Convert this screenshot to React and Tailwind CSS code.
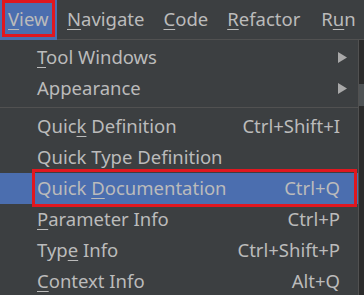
import React from "react";

const font = { fontFamily: '"Noto Sans", "Open Sans", sans-serif' };

function U({ children }) {
  return <span className="underline decoration-1 underline-offset-[3px]">{children}</span>;
}

function Arrow() {
  return (
    <svg width="9" height="11" viewBox="0 0 9 11" className="block">
      <polygon points="0,0 9,5.5 0,11" fill="#a9a9a9" />
    </svg>
  );
}

function Item({ label, shortcut, arrow, active }) {
  return (
    <div className={`relative flex h-[31px] items-center pl-[37px] ${arrow ? "pr-[11px]" : "pr-[18px]"} ${active ? "bg-[#4b6eaf]" : ""}`}>
      <span className="flex-1 whitespace-nowrap">{label}</span>
      {shortcut && <span className="whitespace-nowrap">{shortcut}</span>}
      {arrow && <Arrow />}
    </div>
  );
}

export default function App() {
  return (
    <div className="relative h-[295px] w-[364px] overflow-hidden bg-[#3c3f41] text-[18.5px] leading-none text-[#bbbbbb]" style={font}>
      <div className="flex h-[40px] items-center border-b border-[#515151]">
        <div className="relative flex h-[40px] w-[57px] items-center bg-[#4b6eaf] pl-[8px]">
          <span><U>V</U>iew</span>
          <div className="absolute left-[2px] top-0 h-[37px] w-[53px] border-[3px] border-[#e0171f]" />
        </div>
        <span className="ml-[10px]"><U>N</U>avigate</span>
        <span className="ml-[19px]"><U>C</U>ode</span>
        <span className="ml-[19px]"><U>R</U>efactor</span>
        <span className="ml-[21px]">R<U>u</U>n</span>
      </div>
      <div className="flex">
        <div className="w-[359px] border-r border-[#515151] pt-[2px]">
          <Item label={<><U>T</U>ool Windows</>} arrow />
          <Item label="Appearance" arrow />
          <div className="my-[3px] h-px bg-[#515151]" />
          <Item label={<>Quic<U>k</U> Definition</>} shortcut="Ctrl+Shift+I" />
          <Item label="Quick Type Definition" />
          <div className="relative">
            <Item label={<>Quick <U>D</U>ocumentation</>} shortcut="Ctrl+Q" active />
            <div className="absolute left-[32px] top-[-4px] h-[38px] w-[325px] border-[3px] border-[#e0171f]" />
          </div>
          <Item label={<><U>P</U>arameter Info</>} shortcut="Ctrl+P" />
          <Item label={<>Typ<U>e</U> Info</>} shortcut="Ctrl+Shift+P" />
          <Item label={<><U>C</U>ontext Info</>} shortcut="Alt+Q" />
        </div>
        <div className="flex-1 bg-[#2b2b2b]">
          <div className="mt-[44px] h-[22px] bg-[#4e5254]" />
        </div>
      </div>
    </div>
  );
}
